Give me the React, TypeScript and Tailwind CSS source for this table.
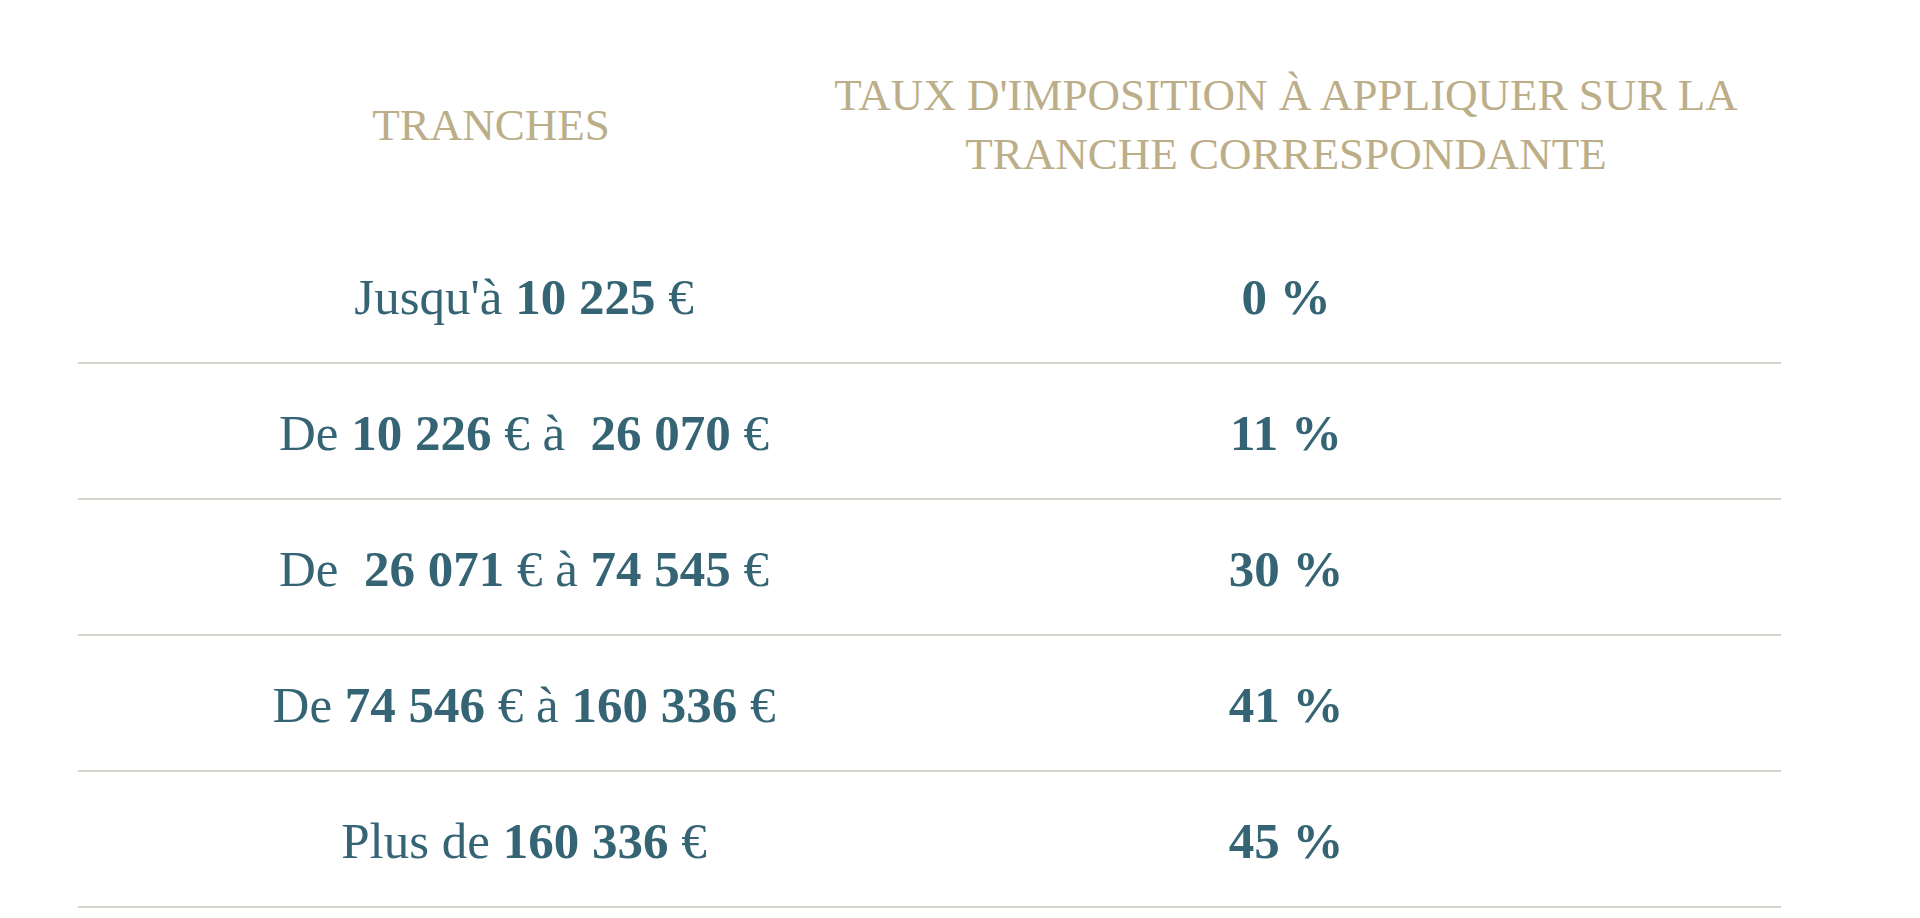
const rows: { label: React.ReactNode; rate: string }[] = [
  { label: <>Jusqu'à <b>10 225</b> €</>, rate: "0 %" },
  { label: <>De <b>10 226</b> € à&nbsp; <b>26 070</b> €</>, rate: "11 %" },
  { label: <>De&nbsp; <b>26 071</b> € à <b>74 545</b> €</>, rate: "30 %" },
  { label: <>De <b>74 546</b> € à <b>160 336</b> €</>, rate: "41 %" },
  { label: <>Plus de <b>160 336</b> €</>, rate: "45 %" },
];

export default function App() {
  return (
    <div className="min-h-screen bg-white font-['Liberation_Serif',serif]">
      <div className="ml-[78px] w-[1703px]">
        <div className="grid h-[228px] grid-cols-[728px_960px] items-center pt-[22px] text-[45px] leading-[59px] text-[#bcae88]">
          <div className="pl-[98px] text-center">TRANCHES</div>
          <div className="text-center">TAUX D'IMPOSITION À APPLIQUER SUR LA TRANCHE CORRESPONDANTE</div>
        </div>
        {rows.map((row, i) => (
          <div
            key={i}
            className="grid h-[136px] grid-cols-[892px_632px] items-center border-b-2 border-[#d6d5cc] pt-[4px] text-[51px] text-[#356474] [&_b]:font-bold"
          >
            <div className="text-center">{row.label}</div>
            <div className="text-center font-bold">{row.rate}</div>
          </div>
        ))}
      </div>
    </div>
  );
}
